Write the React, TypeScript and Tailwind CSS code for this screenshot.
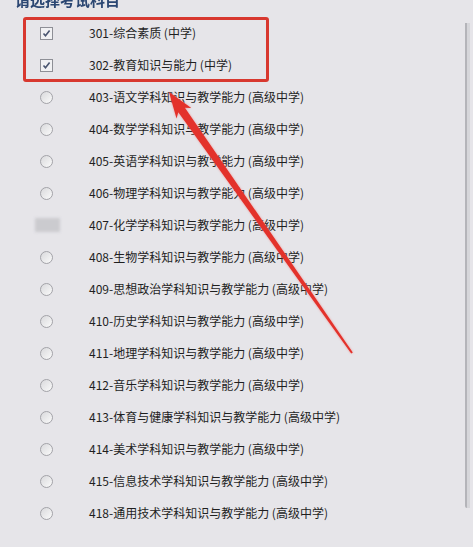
import React from "react";

const checked = ["301-综合素质 (中学)", "302-教育知识与能力 (中学)"];

const subjects = [
  "403-语文学科知识与教学能力 (高级中学)",
  "404-数学学科知识与教学能力 (高级中学)",
  "405-英语学科知识与教学能力 (高级中学)",
  "406-物理学科知识与教学能力 (高级中学)",
  "407-化学学科知识与教学能力 (高级中学)",
  "408-生物学科知识与教学能力 (高级中学)",
  "409-思想政治学科知识与教学能力 (高级中学)",
  "410-历史学科知识与教学能力 (高级中学)",
  "411-地理学科知识与教学能力 (高级中学)",
  "412-音乐学科知识与教学能力 (高级中学)",
  "413-体育与健康学科知识与教学能力 (高级中学)",
  "414-美术学科知识与教学能力 (高级中学)",
  "415-信息技术学科知识与教学能力 (高级中学)",
  "418-通用技术学科知识与教学能力 (高级中学)",
];

function CheckBox() {
  return (
    <div className="w-[13px] h-[13px] border border-[#8e8f96] bg-[#f1f1f3] flex items-center justify-center shrink-0">
      <svg width="9" height="9" viewBox="0 0 9 9">
        <path d="M1.5 4.5 L3.5 6.8 L7.6 1.6" fill="none" stroke="#4a5570" strokeWidth="1.6" />
      </svg>
    </div>
  );
}

function Radio() {
  return (
    <div className="w-[13px] h-[13px] rounded-full border border-[#a3a3a8] bg-gradient-to-br from-[#d9d9dc] to-[#fafafa] shrink-0" />
  );
}

export default function App() {
  return (
    <div
      className="relative w-[473px] h-[547px] overflow-hidden bg-[#e6e5e9] text-[#1f1f1f] flex"
      style={{ fontFamily: '"Noto Sans CJK SC", "Liberation Sans", sans-serif' }}
    >
      <div className="flex-1">
        {/* Title, cut off by the top edge */}
        <div className="h-[17px] pl-[15px] flex">
          <div className="-mt-[9px] text-[15px] leading-[18px] font-bold text-[#2b4672] blur-[0.4px] whitespace-nowrap">
            请选择考试科目
          </div>
        </div>

        {/* Highlighted checked items */}
        <div className="ml-[23px] w-[246px] h-[65px] border-[3px] border-[#d8382f] rounded-[3px] flex flex-col gap-[6px]">
          {checked.map((t) => (
            <div key={t} className="h-[26px] flex items-center pl-[14px] gap-[36px]">
              <CheckBox />
              <span className="text-[12px] leading-none whitespace-nowrap">{t}</span>
            </div>
          ))}
        </div>

        {/* Radio list */}
        <div className="flex flex-col -mt-[1px]">
          {subjects.map((t, i) => (
            <div key={t} className="h-[32px] flex items-center pl-[40px] gap-[36px]">
              {i === 4 ? (
                <div className="w-[13px] h-[13px] shrink-0 relative">
                  <div className="absolute -left-[5px] -top-[1px] w-[25px] h-[14px] bg-[#cbcbcf] blur-[1.5px]" />
                </div>
              ) : (
                <Radio />
              )}
              <span className="text-[12px] leading-none whitespace-nowrap">{t}</span>
            </div>
          ))}
        </div>
      </div>

      {/* Panel edge at the right */}
      <div className="w-[8px] shrink-0 flex">
        <div className="mt-[23px] h-[485px] w-[5px] border-l-2 border-[#b4b4b9] bg-[#d6d6da] rounded-bl-[2px]" />
      </div>

      {/* Red annotation arrow */}
      <svg
        className="absolute left-0 top-0 pointer-events-none"
        width="473"
        height="547"
        viewBox="0 0 473 547"
        style={{ filter: "drop-shadow(0 0 1px rgba(240,120,120,0.7))" }}
      >
        <polygon
          points="169,92 191.3,108.1 184.9,107.7 352.8,352.4 351.2,353.6 178.3,112.3 176.5,118.5"
          fill="#e3322b"
        />
      </svg>
    </div>
  );
}
